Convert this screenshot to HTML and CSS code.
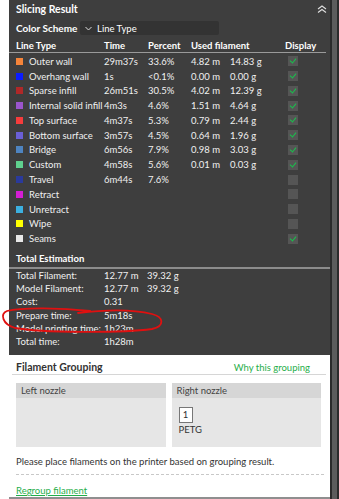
FILE: index.html
```html
<!DOCTYPE html>
<html lang="en">
<head>
  <meta charset="UTF-8">
  <title>Slicing Result</title>
  <link rel="stylesheet" href="styles.css">
</head>
<body>

<div class="page">
  <div class="main">

    <!-- dunkles Panel: Slicing Result -->
    <section class="slice">
      <div class="slice-head">
        <span>Slicing Result</span>
        <svg class="collapse" width="10" height="8" viewBox="0 0 10 8">
          <path d="M1 4 L5 1 L9 4 M1 7.5 L5 4.5 L9 7.5" fill="none" stroke="#e0e0e0" stroke-width="1.1"/>
        </svg>
      </div>

      <div class="scheme">
        <span class="bold scheme-label">Color Scheme</span>
        <div class="combo">
          <svg width="7" height="5" viewBox="0 0 7 5"><path d="M0.5 1 L3.5 4 L6.5 1" fill="none" stroke="#ddd" stroke-width="1"/></svg>
          <span>Line Type</span>
        </div>
      </div>

      <div class="grid head">
        <span>Line Type</span>
        <span>Time</span>
        <span>Percent</span>
        <span class="span2">Used filament</span>
        <span class="disp">Display</span>
      </div>

      <div class="rows">
        <div class="grid row"><span class="name"><i class="sw" style="background:#f5843a"></i>Outer wall</span><span>29m37s</span><span>33.6%</span><span>4.82 m</span><span>14.83 g</span><span class="cb on"></span></div>
        <div class="grid row"><span class="name"><i class="sw" style="background:#0a1cff"></i>Overhang wall</span><span>1s</span><span>&lt;0.1%</span><span>0.00 m</span><span>0.00 g</span><span class="cb on"></span></div>
        <div class="grid row"><span class="name"><i class="sw" style="background:#b02828"></i>Sparse infill</span><span>26m51s</span><span>30.5%</span><span>4.02 m</span><span>12.39 g</span><span class="cb on"></span></div>
        <div class="grid row"><span class="name"><i class="sw" style="background:#9a55cc"></i>Internal solid infill</span><span>4m3s</span><span>4.6%</span><span>1.51 m</span><span>4.64 g</span><span class="cb on"></span></div>
        <div class="grid row"><span class="name"><i class="sw" style="background:#f53c3c"></i>Top surface</span><span>4m37s</span><span>5.3%</span><span>0.79 m</span><span>2.44 g</span><span class="cb on"></span></div>
        <div class="grid row"><span class="name"><i class="sw" style="background:#6a5fd6"></i>Bottom surface</span><span>3m57s</span><span>4.5%</span><span>0.64 m</span><span>1.96 g</span><span class="cb on"></span></div>
        <div class="grid row"><span class="name"><i class="sw" style="background:#4e84c0"></i>Bridge</span><span>6m56s</span><span>7.9%</span><span>0.98 m</span><span>3.03 g</span><span class="cb on"></span></div>
        <div class="grid row"><span class="name"><i class="sw" style="background:#5fd08e"></i>Custom</span><span>4m58s</span><span>5.6%</span><span>0.01 m</span><span>0.03 g</span><span class="cb on"></span></div>
        <div class="grid row"><span class="name"><i class="sw" style="background:#2a3a9c"></i>Travel</span><span>6m44s</span><span>7.6%</span><span></span><span></span><span class="cb"></span></div>
        <div class="grid row"><span class="name"><i class="sw" style="background:#d41ed4"></i>Retract</span><span></span><span></span><span></span><span></span><span class="cb"></span></div>
        <div class="grid row"><span class="name"><i class="sw" style="background:#3cb0e0"></i>Unretract</span><span></span><span></span><span></span><span></span><span class="cb"></span></div>
        <div class="grid row"><span class="name"><i class="sw" style="background:#ffff00"></i>Wipe</span><span></span><span></span><span></span><span></span><span class="cb"></span></div>
        <div class="grid row"><span class="name"><i class="sw" style="background:#e8e8e8"></i>Seams</span><span></span><span></span><span></span><span></span><span class="cb on"></span></div>
      </div>

      <div class="sect-title">Total Estimation</div>

      <div class="totals">
        <div class="trow"><span>Total Filament:</span><span>12.77 m</span><span>39.32 g</span></div>
        <div class="trow"><span>Model Filament:</span><span>12.77 m</span><span>39.32 g</span></div>
        <div class="trow"><span>Cost:</span><span>0.31</span><span></span></div>
        <div class="trow"><span>Prepare time:</span><span>5m18s</span><span></span></div>
        <div class="trow"><span>Model printing time:</span><span>1h23m</span><span></span></div>
        <div class="trow"><span>Total time:</span><span>1h28m</span><span></span></div>
      </div>
    </section>

    <!-- heller Bereich: Filament Grouping -->
    <section class="group">
      <div class="group-head">
        <span class="bold big">Filament Grouping</span>
        <span class="link">Why this grouping</span>
      </div>

      <div class="nozzles">
        <div class="nozzle">
          <div class="nozzle-title">Left nozzle</div>
          <div class="nozzle-body"></div>
        </div>
        <div class="nozzle">
          <div class="nozzle-title">Right nozzle</div>
          <div class="nozzle-body">
            <div class="slot">1</div>
            <div class="mat">PETG</div>
          </div>
        </div>
      </div>

      <p class="hint">Please place filaments on the printer based on grouping result.</p>
      <div class="dashed"></div>
      <a class="regroup">Regroup filament</a>
    </section>
  </div>

  <div class="scrollbar"><div class="thumb"></div></div>

  <!-- rote Markierung -->
  <svg class="mark" width="170" height="32" viewBox="0 0 170 32">
    <path d="M90 5 C62 2, 22 1, 7 5 C0 8, 2 18, 15 22 C42 27, 122 27, 152 23 C165 20, 164 11, 152 8 C132 3, 102 4, 78 7" fill="none" stroke="#e01010" stroke-width="1.8" stroke-linecap="round"/>
  </svg>
</div>

</body>
</html>
```

FILE: styles.css
```css
html, body {
  margin: 0;
  background: #fff;
  font-family: Lato, "Noto Sans", sans-serif;
  font-size: 9.5px;
}

.page {
  position: relative;
  display: flex;
  height: 499px;
  padding-left: 9px;
  overflow: hidden;
  white-space: nowrap;
}

.main {
  width: 321px;
  display: flex;
  flex-direction: column;
}

.bold {
  font-weight: bold;
}

.big {
  font-size: 10.5px;
}

/* Dunkles Panel */
.slice {
  background: #3e3e3e;
  color: #f0f0f0;
  padding-bottom: 7px;
}

.slice-head {
  height: 18px;
  display: flex;
  align-items: center;
  justify-content: space-between;
  padding: 0 3px 0 7px;
  font-size: 10.5px;
  font-weight: bold;
  color: #fff;
}

.scheme {
  height: 20px;
  display: flex;
  align-items: center;
  padding-left: 7px;
  color: #fff;
}

.scheme-label {
  font-size: 10px;
  width: 64px;
}

.combo {
  width: 139px;
  height: 14px;
  background: #333;
  border-radius: 2px;
  display: flex;
  align-items: center;
  gap: 5px;
  padding-left: 5px;
  box-sizing: border-box;
}

.grid {
  display: grid;
  grid-template-columns: 88px 44px 43px 39px 55px 36px;
  align-items: center;
  padding-left: 7px;
}

.head {
  height: 14px;
  font-weight: bold;
  color: #fff;
  border-bottom: 1px solid #9a9a9a;
  margin-right: 4px;
}

.span2 {
  grid-column: span 2;
}

.rows {
  padding-top: 1px;
}

.row {
  height: 14.77px;
}

.name {
  display: flex;
  align-items: center;
  gap: 6px;
}

.sw {
  width: 7px;
  height: 7px;
  flex: none;
}

.cb {
  width: 10px;
  height: 10px;
  background: #555;
  margin-left: 3px;
  position: relative;
}

.cb.on::after {
  content: "";
  position: absolute;
  left: 3px;
  top: 1px;
  width: 3px;
  height: 5px;
  border-right: 1.3px solid #18c24c;
  border-bottom: 1.3px solid #18c24c;
  transform: rotate(40deg);
}

.sect-title {
  padding: 6px 0 1px 7px;
  line-height: 14px;
  font-weight: bold;
  color: #fff;
  border-bottom: 2px solid #8c8c8c;
}

.totals {
  padding-left: 7px;
}

.trow {
  height: 13.2px;
  display: grid;
  grid-template-columns: 88px 43px auto;
  align-items: center;
}

/* Heller Bereich */
.group {
  flex: 1;
  color: #333;
  border-bottom: 2px solid #8f8f8f;
  padding: 5px 0 0 7px;
}

.group-head {
  display: flex;
  justify-content: space-between;
  align-items: center;
  height: 14px;
  margin-left: -4px;
  margin-right: 4px;
  padding: 0 16px 0 4px;
  border-bottom: 1px solid #d6d6d6;
}

.link {
  color: #1fae4a;
}

.nozzles {
  display: flex;
  gap: 6px;
  margin-top: 8px;
  width: 305px;
}

.nozzle {
  flex: 1;
  background: #e6e6e6;
  height: 64px;
}

.nozzle-title {
  height: 15px;
  line-height: 15px;
  background: #d6d6d6;
  padding-left: 5px;
  color: #444;
}

.nozzle-body {
  padding: 9px 0 0 7px;
}

.slot {
  width: 14px;
  height: 16px;
  box-sizing: border-box;
  background: #fff;
  border: 1px solid #777;
  line-height: 14px;
  text-align: center;
}

.mat {
  line-height: 12px;
  margin-top: 1px;
}

.hint {
  margin: 8px 0 0;
  line-height: 14px;
}

.dashed {
  margin-top: 5px;
  width: 308px;
  border-top: 1px dashed #c8c8c8;
}

.regroup {
  display: block;
  margin-top: 10px;
  line-height: 12px;
  color: #1fae4a;
  text-decoration: underline;
}

/* Scrollbar rechts */
.scrollbar {
  width: 9px;
  background: #2b2b2b;
  padding-left: 2px;
  box-sizing: border-box;
}

.thumb {
  width: 5px;
  height: 100%;
  background: #5c5c5c;
}

.mark {
  position: absolute;
  left: 0;
  top: 306px;
}
```
